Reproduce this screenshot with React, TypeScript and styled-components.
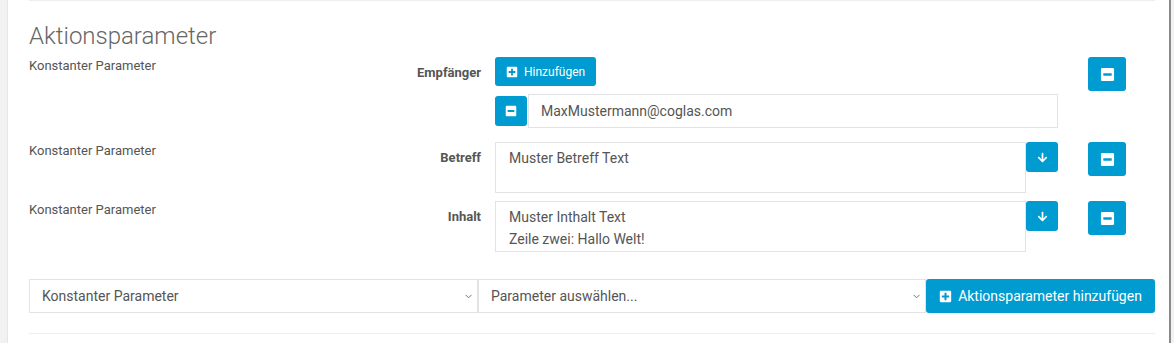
import * as React from 'react';
import styled, { createGlobalStyle } from 'styled-components';
import { FaPlusSquare, FaMinusSquare, FaArrowDown } from 'react-icons/fa';

const BLUE = '#009bd0';
const BORDER = '#e3e3e3';

const GlobalStyle = createGlobalStyle`
	html, body, #root {
		margin: 0;
		padding: 0;
		height: 100%;
	}
	body {
		background: #f2f2f2;
		font-family: Roboto, "Liberation Sans", sans-serif;
		color: #555;
	}
`

const Page = styled.div`
	display: flex;
	height: 343px;
	overflow: hidden;
`

const Gutter = styled.div`
	width: 7px;
	background: #f2f2f2;
	border-right: 1px solid #e6e6e6;
`

const Panel = styled.div`
	width: 1163px;
	box-sizing: border-box;
	background: #fff;
	border-right: 2px solid #8a8a8a;
	padding: 0 14px 0 21px;
`

const Content = styled.div`
	border-top: 1px solid #eee;
`

const Title = styled.h2`
	margin: 22px 0 8px;
	font-size: 24px;
	font-weight: 300;
	line-height: 1.1;
	color: #666;
`

const Row = styled.div<{ $gap: number }>`
	display: flex;
	align-items: flex-start;
	margin-bottom: ${p => p.$gap}px;
`

const SourceLabel = styled.div`
	width: 366px;
	font-size: 13px;
	line-height: 18.5px;
	color: #555;
`

const FieldLabel = styled.label`
	width: 86px;
	margin-right: 14px;
	padding-top: 7px;
	text-align: right;
	font-size: 13px;
	line-height: 18.5px;
	font-weight: 700;
	color: #555;
`

const Field = styled.div`
	width: 563px;
	display: flex;
	flex-direction: column;
	align-items: flex-start;
`

const FieldLine = styled.div`
	display: flex;
	align-items: flex-start;
	width: 100%;
`

const ActionCell = styled.div`
	margin-left: 30px;
	width: 38px;
`

const BlueButton = styled.button<{ $w?: number; $h: number; $fs?: number }>`
	display: inline-flex;
	align-items: center;
	justify-content: center;
	gap: 6px;
	${p => (p.$w ? `width: ${p.$w}px;` : 'padding: 0 11px;')}
	height: ${p => p.$h}px;
	box-sizing: border-box;
	border: none;
	border-radius: 3px;
	background: ${BLUE};
	color: #fff;
	font-family: Roboto, "Liberation Sans", sans-serif;
	font-size: ${p => p.$fs || 12}px;
	cursor: pointer;
	flex-shrink: 0;
`

const InputGroup = styled.div`
	display: flex;
	align-items: center;
	width: 100%;
	margin-top: 8px;
	gap: 1px;
`

const TextInput = styled.div`
	flex: 1;
	height: 34px;
	box-sizing: border-box;
	border: 1px solid ${BORDER};
	padding: 0 12px;
	display: flex;
	align-items: center;
	font-size: 14px;
	color: #555;
`

const TextArea = styled.textarea`
	width: 531px;
	height: 51px;
	box-sizing: border-box;
	border: 1px solid ${BORDER};
	padding: 5px 13px;
	margin: 0;
	font-family: Roboto, "Liberation Sans", sans-serif;
	font-size: 14px;
	line-height: 21.7px;
	color: #555;
	resize: none;
	overflow: hidden;
	outline: none;
`

const BottomBar = styled.div`
	display: flex;
	margin-top: 27px;
`

const SelectBox = styled.div<{ $w: number }>`
	width: ${p => p.$w}px;
	height: 34px;
	box-sizing: border-box;
	border: 1px solid ${BORDER};
	padding: 0 5px 0 12px;
	display: flex;
	align-items: center;
	justify-content: space-between;
	font-size: 14px;
	color: #555;
`

const Divider = styled.div`
	margin-top: 20px;
	border-top: 1px solid #eee;
`

const Chevron = () => (
	<svg width="7" height="5" viewBox="0 0 7 5">
		<polyline points="0.5,0.8 3.5,3.8 6.5,0.8" fill="none" stroke="#777" strokeWidth="1" />
	</svg>
)

const RemoveRow = () => (
	<ActionCell>
		<BlueButton $w={38} $h={34}><FaMinusSquare size={15} /></BlueButton>
	</ActionCell>
)

const TextParam = ({ label, value }: { label: string; value: string }) => (
	<Row $gap={8}>
		<SourceLabel>Konstanter Parameter</SourceLabel>
		<FieldLabel>{label}</FieldLabel>
		<Field>
			<FieldLine>
				<TextArea readOnly value={value} />
				<BlueButton $w={32} $h={30}><FaArrowDown size={11} /></BlueButton>
			</FieldLine>
		</Field>
		<RemoveRow />
	</Row>
)

export default function App() {
	return (
		<Page>
			<GlobalStyle />
			<Gutter />
			<Panel>
				<Content>
					<Title>Aktionsparameter</Title>

					<Row $gap={14}>
						<SourceLabel>Konstanter Parameter</SourceLabel>
						<FieldLabel>Empfänger</FieldLabel>
						<Field>
							<BlueButton $h={29}><FaPlusSquare size={12} />Hinzufügen</BlueButton>
							<InputGroup>
								<BlueButton $w={32} $h={30}><FaMinusSquare size={12} /></BlueButton>
								<TextInput>MaxMustermann@coglas.com</TextInput>
							</InputGroup>
						</Field>
						<RemoveRow />
					</Row>

					<TextParam label="Betreff" value="Muster Betreff Text" />
					<TextParam label="Inhalt" value={'Muster Inthalt Text\nZeile zwei: Hallo Welt!'} />

					<BottomBar>
						<SelectBox $w={449}>Konstanter Parameter<Chevron /></SelectBox>
						<SelectBox $w={448}>Parameter auswählen...<Chevron /></SelectBox>
						<BlueButton $w={229} $h={34} $fs={14}>
							<FaPlusSquare size={13} />Aktionsparameter hinzufügen
						</BlueButton>
					</BottomBar>

					<Divider />
				</Content>
			</Panel>
		</Page>
	)
}
